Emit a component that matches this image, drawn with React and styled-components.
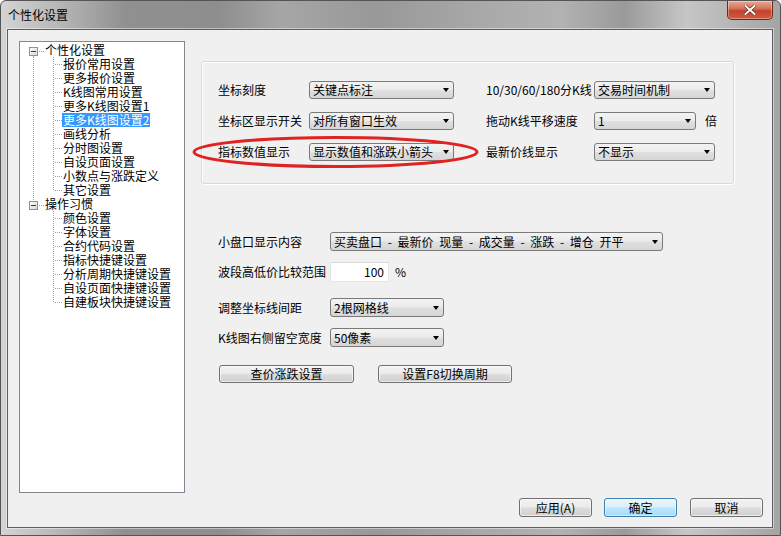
import React from "react";
import styled, { createGlobalStyle } from "styled-components";

const GlobalStyle = createGlobalStyle`
  html, body { margin: 0; padding: 0; background: #fff; }
  body {
    font-family: "Noto Sans CJK SC", "Liberation Sans", sans-serif;
    font-size: 12px;
    color: #000;
  }
`;

//=== 窗口外框 ===//
const Window = styled.div`
  width: 781px;
  height: 536px;
  box-sizing: border-box;
  display: flex;
  flex-direction: column;
  border: 1px solid #555;
  border-radius: 6px 6px 0 0;
  background: linear-gradient(90deg, #d4d4d4 0%, #b4b4b4 8%, #909090 16%, #8e8e8e 28%, #a6a6a6 36%, #989898 48%, #a9a9a9 62%, #b2b2b2 72%, #9a9a9a 80%, #c6c6c6 88%, #a4a4a4 100%);
  overflow: hidden;
`;

const TitleBar = styled.div`
  height: 28px;
  display: flex;
  align-items: center;
  padding-left: 7px;
`;

const TitleText = styled.span`
  flex: 1;
  line-height: 14px;
  color: #000;
`;

const CloseButton = styled.div`
  align-self: flex-start;
  width: 46px;
  height: 19px;
  margin-right: 7px;
  box-sizing: border-box;
  border: 1px solid #6b2a1e;
  border-top: none;
  border-radius: 0 0 5px 5px;
  background: linear-gradient(#e6a995 0%, #d6765f 40%, #c2432c 55%, #d25a3e 100%);
  box-shadow: inset 0 0 0 1px rgba(255, 255, 255, 0.35);
  display: flex;
  align-items: center;
  justify-content: center;
`;

const Frame = styled.div`
  flex: 1;
  display: flex;
  padding: 0 7px 7px 6px;
`;

const Client = styled.div`
  flex: 1;
  display: flex;
  flex-direction: column;
  background: #f0f0f0;
  border: 1px solid #5e5e5e;
  box-shadow: 0 0 0 1px rgba(255, 255, 255, 0.45);
`;

const Body = styled.div`
  display: flex;
  padding: 11px 0 0 11px;
`;

//=== 左侧树 ===//
const Tree = styled.div`
  width: 166px;
  height: 452px;
  box-sizing: border-box;
  border: 1px solid #828790;
  background: #fff;
  padding-top: 1px;
`;

const TreeRow = styled.div`
  height: 14px;
  display: flex;
  align-items: center;
  white-space: nowrap;
`;

const TreeLabel = styled.span`
  line-height: 14px;
  height: 14px;
  padding: 0 1px;
  background: ${p => (p.$selected ? "#3399ff" : "transparent")};
  color: ${p => (p.$selected ? "#fff" : "#000")};
`;

const DOT = "#a0a0a0";

const RootConnector = ({ up, down }) => (
  <svg width="24" height="14" style={{ display: "block", flex: "none" }}>
    {up && <line x1="13.5" y1="0" x2="13.5" y2="4" stroke={DOT} strokeDasharray="1 1" />}
    {down && <line x1="13.5" y1="13" x2="13.5" y2="14" stroke={DOT} strokeDasharray="1 1" />}
    <line x1="19" y1="8.5" x2="24" y2="8.5" stroke={DOT} strokeDasharray="1 1" />
    <defs>
      <linearGradient id="exg" x1="0" y1="0" x2="1" y2="1">
        <stop offset="0" stopColor="#ffffff" />
        <stop offset="1" stopColor="#d6d6d6" />
      </linearGradient>
    </defs>
    <rect x="9.5" y="4.5" width="8" height="8" fill="url(#exg)" stroke="#919191" />
    <line x1="11" y1="8.5" x2="16" y2="8.5" stroke="#3a3a3a" />
  </svg>
);

const ChildConnector = ({ trunk, last }) => (
  <svg width="42" height="14" style={{ display: "block", flex: "none" }}>
    {trunk && <line x1="13.5" y1="0" x2="13.5" y2="14" stroke={DOT} strokeDasharray="1 1" />}
    <line x1="33.5" y1="0" x2="33.5" y2={last ? 8 : 14} stroke={DOT} strokeDasharray="1 1" />
    <line x1="35" y1="7.5" x2="42" y2="7.5" stroke={DOT} strokeDasharray="1 1" />
  </svg>
);

const treeData = [
  {
    title: "个性化设置",
    children: ["报价常用设置", "更多报价设置", "K线图常用设置", "更多K线图设置1", "更多K线图设置2", "画线分析", "分时图设置", "自设页面设置", "小数点与涨跌定义", "其它设置"],
  },
  {
    title: "操作习惯",
    children: ["颜色设置", "字体设置", "合约代码设置", "指标快捷键设置", "分析周期快捷键设置", "自设页面快捷键设置", "自建板块快捷键设置"],
  },
];

//=== 右侧设置区 ===//
const RightArea = styled.div`
  position: relative;
  margin-left: 16px;
  padding-top: 20px;
`;

const GroupBox = styled.div`
  width: 533px;
  height: 123px;
  box-sizing: border-box;
  border: 1px solid #d5dadf;
  border-radius: 3px;
  box-shadow: inset 1px 1px 0 #fff, 1px 1px 0 #fff;
  padding: 19px 0 0 16px;
  display: grid;
  grid-template-columns: 91px 177px 108px auto;
  grid-auto-rows: 18px;
  row-gap: 13px;
  align-items: center;
`;

const Label = styled.span`
  line-height: 14px;
  white-space: nowrap;
  width: ${p => (p.$w ? `${p.$w}px` : "auto")};
  flex: none;
`;

const Cell = styled.div`
  display: flex;
  align-items: center;
`;

const Combo = styled.div`
  width: ${p => p.$w}px;
  height: ${p => p.$h || 18}px;
  box-sizing: border-box;
  flex: none;
  border: 1px solid #7a7a7a;
  border-radius: 3px;
  background: linear-gradient(#f3f3f3 0%, #ebebeb 48%, #dfdfdf 52%, #d6d6d6 100%);
  display: flex;
  align-items: center;
  padding: 0 4px 0 3px;
  line-height: 14px;
  white-space: nowrap;
  word-spacing: ${p => p.$ws || 0}px;
  span { flex: 1; }
`;

const Arrow = styled.i`
  width: 0;
  height: 0;
  border-left: 3.5px solid transparent;
  border-right: 3.5px solid transparent;
  border-top: 4px solid #000;
  flex: none;
`;

const Select = ({ w, h, ws, children }) => (
  <Combo $w={w} $h={h} $ws={ws}>
    <span>{children}</span>
    <Arrow />
  </Combo>
);

const Unit = styled.span`
  margin-left: ${p => p.$ml}px;
  line-height: 14px;
`;

const Lower = styled.div`
  display: flex;
  flex-direction: column;
  margin-top: 48px;
  padding-left: 17px;
`;

const FormRow = styled.div`
  display: flex;
  align-items: center;
  height: ${p => p.$h}px;
  margin-top: ${p => p.$mt || 0}px;
`;

const TextInput = styled.div`
  width: 59px;
  height: 20px;
  box-sizing: border-box;
  background: #fff;
  border: 1px solid #e6e6e6;
  border-top-color: #d9d9d9;
  display: flex;
  align-items: center;
  justify-content: flex-end;
  padding-right: 4px;
  line-height: 14px;
`;

const Button = styled.div`
  width: ${p => p.$w}px;
  height: ${p => p.$h || 18}px;
  box-sizing: border-box;
  flex: none;
  margin-left: ${p => p.$ml || 0}px;
  border: 1px solid ${p => (p.$focus ? "#3c7fb1" : "#707070")};
  border-radius: 3px;
  background: ${p => (p.$focus
    ? "linear-gradient(#eaf6fd 0%, #d9f0fc 48%, #bee6fd 52%, #a7d9f5 100%)"
    : "linear-gradient(#f2f2f2 0%, #ebebeb 48%, #dddddd 52%, #cfcfcf 100%)")};
  box-shadow: inset 0 0 0 1px ${p => (p.$focus ? "rgba(255,255,255,0.5)" : "rgba(255,255,255,0.6)")};
  display: flex;
  align-items: center;
  justify-content: center;
  line-height: 14px;
  white-space: nowrap;
`;

const Footer = styled.div`
  display: flex;
  justify-content: flex-end;
  gap: 12px;
  padding-right: 9px;
  margin-top: 5px;
`;

const Highlight = styled.svg`
  position: absolute;
  left: -9px;
  top: 95px;
  pointer-events: none;
`;

const App = () => {
  return (
    <>
      <GlobalStyle />
      <Window>
        <TitleBar>
          <TitleText>个性化设置</TitleText>
          <CloseButton>
            <svg width="12" height="10" viewBox="0 0 12 10">
              <path d="M1.5 1 L10.5 9 M10.5 1 L1.5 9" stroke="#5a1d12" strokeWidth="3.2" strokeLinecap="square" />
              <path d="M1.5 1 L10.5 9 M10.5 1 L1.5 9" stroke="#fff" strokeWidth="2" strokeLinecap="square" />
            </svg>
          </CloseButton>
        </TitleBar>
        <Frame>
          <Client>
            <Body>
              <Tree>
                {treeData.map((group, gi) => {
                  const hasNext = gi < treeData.length - 1;
                  return (
                    <React.Fragment key={group.title}>
                      <TreeRow>
                        <RootConnector up={gi > 0} down={hasNext} />
                        <TreeLabel>{group.title}</TreeLabel>
                      </TreeRow>
                      {group.children.map((name, ci) => (
                        <TreeRow key={name}>
                          <ChildConnector trunk={hasNext} last={ci === group.children.length - 1} />
                          <TreeLabel $selected={name === "更多K线图设置2"}>{name}</TreeLabel>
                        </TreeRow>
                      ))}
                    </React.Fragment>
                  );
                })}
              </Tree>
              <RightArea>
                <GroupBox>
                  <Label>坐标刻度</Label>
                  <Cell><Select w={145}>关键点标注</Select></Cell>
                  <Label>10/30/60/180分K线</Label>
                  <Cell><Select w={121}>交易时间机制</Select></Cell>

                  <Label>坐标区显示开关</Label>
                  <Cell><Select w={145}>对所有窗口生效</Select></Cell>
                  <Label>拖动K线平移速度</Label>
                  <Cell><Select w={102}>1</Select><Unit $ml={9}>倍</Unit></Cell>

                  <Label>指标数值显示</Label>
                  <Cell><Select w={145}>显示数值和涨跌小箭头</Select></Cell>
                  <Label>最新价线显示</Label>
                  <Cell><Select w={121}>不显示</Select></Cell>
                </GroupBox>
                <Lower>
                  <FormRow $h={19}>
                    <Label $w={112}>小盘口显示内容</Label>
                    <Select w={333} h={19} ws={3}>买卖盘口 - 最新价 现量 - 成交量 - 涨跌 - 增仓 开平</Select>
                  </FormRow>
                  <FormRow $h={20} $mt={11}>
                    <Label $w={112}>波段高低价比较范围</Label>
                    <TextInput>100</TextInput>
                    <Unit $ml={6}>%</Unit>
                  </FormRow>
                  <FormRow $h={19} $mt={16}>
                    <Label $w={112}>调整坐标线间距</Label>
                    <Select w={114} h={19}>2根网格线</Select>
                  </FormRow>
                  <FormRow $h={19} $mt={11}>
                    <Label $w={112}>K线图右侧留空宽度</Label>
                    <Select w={114} h={19}>50像素</Select>
                  </FormRow>
                  <FormRow $h={18} $mt={18}>
                    <Button $w={135} $ml={1}>查价涨跌设置</Button>
                    <Button $w={134} $ml={24}>设置F8切换周期</Button>
                  </FormRow>
                </Lower>
                <Highlight width="288" height="33" viewBox="0 0 288 33">
                  <ellipse cx="143.5" cy="16" rx="141.5" ry="14.5" fill="none" stroke="#e02222" strokeWidth="3" />
                </Highlight>
              </RightArea>
            </Body>
            <Footer>
              <Button $w={73} $h={19}>应用(A)</Button>
              <Button $w={73} $h={19} $focus>确定</Button>
              <Button $w={73} $h={19} style={{ marginLeft: 1 }}>取消</Button>
            </Footer>
          </Client>
        </Frame>
      </Window>
    </>
  );
};

export default App;
